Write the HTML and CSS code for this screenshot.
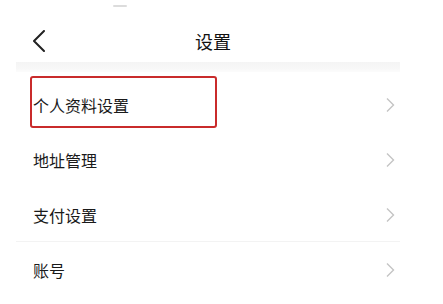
FILE: index.html
```html
<!DOCTYPE html>
<html lang="zh-CN">
<head>
<meta charset="utf-8">
<title>设置</title>
<link rel="stylesheet" href="styles.css">
</head>
<body>
<div class="status"><span class="dash"></span></div>
<header class="header">
  <svg class="back" width="12" height="22" viewBox="0 0 12 22"><polyline points="11,1 1,11 11,21" fill="none" stroke="#222" stroke-width="2" stroke-linecap="round" stroke-linejoin="round"/></svg>
  <h1 class="title">设置</h1>
</header>
<div class="band"></div>
<ul class="list">
  <li class="row highlighted"><span class="label">个人资料设置</span><svg class="chev" width="10" height="16" viewBox="0 0 10 16"><polyline points="2,1.5 8.5,8 2,14.5" fill="none" stroke="#c4c4c4" stroke-width="1.4"/></svg><span class="mark"></span></li>
  <li class="row"><span class="label">地址管理</span><svg class="chev" width="10" height="16" viewBox="0 0 10 16"><polyline points="2,1.5 8.5,8 2,14.5" fill="none" stroke="#c4c4c4" stroke-width="1.4"/></svg></li>
  <li class="row divided"><span class="label">支付设置</span><svg class="chev" width="10" height="16" viewBox="0 0 10 16"><polyline points="2,1.5 8.5,8 2,14.5" fill="none" stroke="#c4c4c4" stroke-width="1.4"/></svg></li>
  <li class="row"><span class="label">账号</span><svg class="chev" width="10" height="16" viewBox="0 0 10 16"><polyline points="2,1.5 8.5,8 2,14.5" fill="none" stroke="#c4c4c4" stroke-width="1.4"/></svg></li>
</ul>
</body>
</html>
```
FILE: styles.css
```css
* { box-sizing: border-box; }
html, body { margin: 0; padding: 0; background: #fff; }
body {
  font-family: "Noto Sans CJK SC", "Noto Sans", sans-serif;
  color: #1a1a1a;
  width: 443px;
  height: 304px;
  overflow: hidden;
}
.status {
  height: 20px;
  padding: 5px 0 0 113px;
}
.dash {
  display: block;
  width: 14px;
  height: 2px;
  background: #dcdcdc;
  border-radius: 1px;
}
.header {
  display: flex;
  align-items: center;
  height: 42px;
  margin-left: 16px;
  width: 384px;
  padding-left: 17px;
}
.back { display: block; flex: none; }
.title {
  margin: 0 0 0 150px;
  font-size: 18px;
  font-weight: 400;
  line-height: 22px;
  color: #111;
}
.band {
  margin-left: 16px;
  width: 384px;
  height: 10px;
  background: linear-gradient(#f4f4f4, #f8f8f8 70%, #fcfcfc);
}
.list {
  list-style: none;
  margin: 5px 0 0 16px;
  padding: 0;
  width: 384px;
}
.row {
  position: relative;
  display: flex;
  align-items: center;
  justify-content: space-between;
  height: 55px;
  padding: 0 5px 0 17px;
  font-size: 16px;
  line-height: 20px;
  color: #1a1a1a;
}
.label { padding-top: 1px; }
.chev { display: block; flex: none; margin-top: 1px; }
.divided { border-bottom: 1.5px solid #f3f3f3; }
.mark {
  position: absolute;
  left: 14px;
  top: -1px;
  width: 187px;
  height: 52px;
  border: 2.5px solid #c92b2b;
  border-radius: 3px;
  pointer-events: none;
}
```
